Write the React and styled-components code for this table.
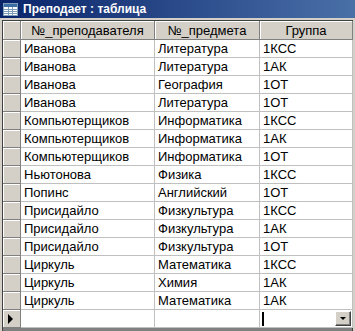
import styled, { createGlobalStyle } from "styled-components";

const GlobalStyle = createGlobalStyle`
  html, body {
    margin: 0;
    padding: 0;
    background: #d4d0c8;
  }
`;

const rows = [
  ["Иванова", "Литература", "1КСС"],
  ["Иванова", "Литература", "1АК"],
  ["Иванова", "География", "1ОТ"],
  ["Иванова", "Литература", "1ОТ"],
  ["Компьютерщиков", "Информатика", "1КСС"],
  ["Компьютерщиков", "Информатика", "1АК"],
  ["Компьютерщиков", "Информатика", "1ОТ"],
  ["Ньютонова", "Физика", "1КСС"],
  ["Попинс", "Английский", "1ОТ"],
  ["Присидайло", "Физкультура", "1КСС"],
  ["Присидайло", "Физкультура", "1АК"],
  ["Присидайло", "Физкультура", "1ОТ"],
  ["Циркуль", "Математика", "1КСС"],
  ["Циркуль", "Химия", "1АК"],
  ["Циркуль", "Математика", "1АК"],
];

const TableIcon = () => (
  <svg width="15" height="13" viewBox="0 0 15 13">
    <rect x="0.5" y="0.5" width="14" height="12" fill="#fff" stroke="#7f9db9" />
    <rect x="1" y="1" width="13" height="3" fill="#3a6ea5" />
    <path d="M1 6.5h13M1 8.5h13M1 10.5h13M5.5 4v8M9.5 4v8" stroke="#7f9db9" strokeWidth="1" />
  </svg>
);

const App = () => {
  return (
    <>
      <GlobalStyle />
      <Window>
        <TitleBar>
          <TableIcon />
          <Title>Преподает : таблица</Title>
        </TitleBar>
        <Sheet>
          <Row $head>
            <Selector />
            <HeadCell>№_преподавателя</HeadCell>
            <HeadCell>№_предмета</HeadCell>
            <HeadCell>Группа</HeadCell>
          </Row>
          {rows.map((r, i) => (
            <Row key={i}>
              <Selector />
              <Cell>{r[0]}</Cell>
              <Cell>{r[1]}</Cell>
              <Cell>{r[2]}</Cell>
            </Row>
          ))}
          <Row>
            <Selector>
              <Arrow />
            </Selector>
            <Cell />
            <Cell />
            <Cell>
              <Caret />
              <DropButton>
                <DownArrow />
              </DropButton>
            </Cell>
          </Row>
        </Sheet>
      </Window>
    </>
  );
};

const Window = styled.div`
  width: 355px;
  height: 331px;
  overflow: hidden;
  background: #d4d0c8;
  display: flex;
  flex-direction: column;
`;

const TitleBar = styled.div`
  height: 18px;
  flex-shrink: 0;
  display: flex;
  align-items: center;
  gap: 5px;
  padding-left: 3px;
  background: linear-gradient(to right, #0a246a, #4a70a8);
`;

const Title = styled.span`
  color: #fff;
  font-family: "Liberation Sans", Arial, sans-serif;
  font-weight: 700;
  font-size: 12px;
`;

const Sheet = styled.div`
  flex: 1;
  margin: 2px 2px 0 2px;
  border-top: 1px solid #404040;
  border-left: 1px solid #404040;
  border-right: 1px solid #404040;
  background: #808080;
`;

const Row = styled.div`
  display: grid;
  grid-template-columns: 18px 134px 105px 93px;
  height: ${(p) => (p.$head ? "19px" : "18px")};
`;

const Selector = styled.div`
  box-sizing: border-box;
  background: #d4d0c8;
  border-right: 1px solid #808080;
  border-bottom: 1px solid #808080;
  box-shadow: inset 1px 1px #ffffff;
  display: flex;
  align-items: center;
  justify-content: center;
`;

const HeadCell = styled.div`
  box-sizing: border-box;
  background: #d4d0c8;
  border-right: 1px solid #808080;
  border-bottom: 1px solid #808080;
  box-shadow: inset 1px 1px #ffffff;
  font-family: "Liberation Sans", Arial, sans-serif;
  font-size: 13px;
  color: #000;
  text-align: center;
  line-height: 19px;
  white-space: nowrap;
  overflow: hidden;
`;

const Cell = styled.div`
  position: relative;
  box-sizing: border-box;
  background: #fff;
  border-right: 1px solid #c0c0c0;
  border-bottom: 1px solid #c0c0c0;
  padding-left: 3px;
  font-family: "Liberation Sans", Arial, sans-serif;
  font-size: 13px;
  color: #000;
  line-height: 18px;
  white-space: nowrap;
  overflow: hidden;
`;

const Arrow = styled.div`
  width: 0;
  height: 0;
  border-top: 5px solid transparent;
  border-bottom: 5px solid transparent;
  border-left: 5px solid #000;
  margin-left: -2px;
`;

const Caret = styled.div`
  position: absolute;
  left: 2px;
  top: 2px;
  width: 2px;
  height: 14px;
  background: #000;
`;

const DropButton = styled.div`
  position: absolute;
  right: 1px;
  top: 1px;
  width: 16px;
  height: 15px;
  box-sizing: border-box;
  background: #d4d0c8;
  border-top: 1px solid #fff;
  border-left: 1px solid #fff;
  border-right: 1px solid #404040;
  border-bottom: 1px solid #404040;
  box-shadow: inset -1px -1px #808080;
  display: flex;
  align-items: center;
  justify-content: center;
`;

const DownArrow = styled.div`
  width: 0;
  height: 0;
  border-left: 3px solid transparent;
  border-right: 3px solid transparent;
  border-top: 3px solid #000;
`;

export default App;
